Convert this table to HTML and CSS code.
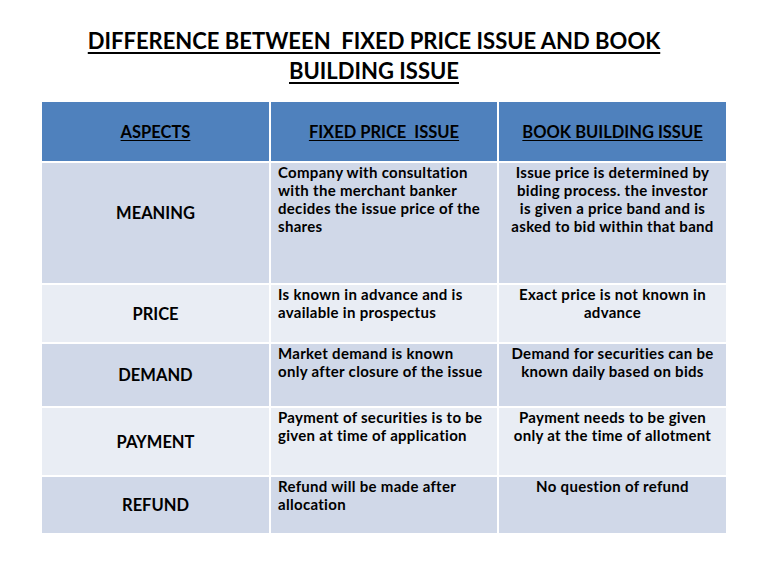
FILE: index.html
```html
<!DOCTYPE html>
<html lang="en">
<head>
<meta charset="utf-8">
<title>Difference between Fixed Price Issue and Book Building Issue</title>
<link rel="stylesheet" href="styles.css">
</head>
<body>
<h1 class="title">DIFFERENCE BETWEEN&nbsp; FIXED PRICE ISSUE AND BOOK<br>BUILDING ISSUE</h1>
<table class="cmp">
  <colgroup>
    <col class="c1"><col class="c2"><col class="c3">
  </colgroup>
  <thead>
    <tr class="head">
      <th><span class="u">ASPECTS</span></th>
      <th><span class="u">FIXED PRICE&nbsp; ISSUE</span></th>
      <th><span class="u">BOOK BUILDING ISSUE</span></th>
    </tr>
  </thead>
  <tbody>
    <tr class="r-meaning odd">
      <td class="aspect"><span class="lbl-meaning">MEANING</span></td>
      <td class="fixed">Company with consultation<br>with the merchant banker<br>decides the issue price of the<br>shares</td>
      <td class="book">Issue price is determined by<br>biding process. the investor<br>is given a price band and is<br>asked to bid within that band</td>
    </tr>
    <tr class="r-price even">
      <td class="aspect">PRICE</td>
      <td class="fixed">Is known in advance and is<br>available in prospectus</td>
      <td class="book">Exact price is not known in<br>advance</td>
    </tr>
    <tr class="r-demand odd">
      <td class="aspect">DEMAND</td>
      <td class="fixed">Market demand is known<br>only after closure of the issue</td>
      <td class="book">Demand for securities can be<br>known daily based on bids</td>
    </tr>
    <tr class="r-payment even">
      <td class="aspect">PAYMENT</td>
      <td class="fixed">Payment of securities is to be<br>given at time of application</td>
      <td class="book">Payment needs to be given<br>only at the time of allotment</td>
    </tr>
    <tr class="r-refund odd">
      <td class="aspect">REFUND</td>
      <td class="fixed">Refund will be made after<br>allocation</td>
      <td class="book">No question of refund</td>
    </tr>
  </tbody>
</table>
</body>
</html>
```
FILE: styles.css
```css
html, body {
  margin: 0;
  padding: 0;
  background: #ffffff;
}
body {
  font-family: Lato, "Open Sans", "Liberation Sans", sans-serif;
  font-weight: 700;
  color: #000000;
  width: 768px;
  height: 576px;
  overflow: hidden;
}
.title {
  margin: 26px 0 0 0;
  font-size: 22px;
  line-height: 30px;
  font-weight: 700;
  text-align: center;
  text-decoration: underline;
  text-decoration-thickness: 2px;
  text-underline-offset: 3px;
  width: 748px;
}
.cmp {
  margin: 14px 0 0 40px;
  border-collapse: separate;
  border-spacing: 2px;
  table-layout: fixed;
  width: 688px;
}
.c1 { width: 227px; }
.c2 { width: 226px; }
.c3 { width: 227px; }
.cmp th, .cmp td {
  padding: 0;
}
.head th {
  background: #4f81bd;
  height: 59px;
  font-size: 16.5px;
  font-weight: 700;
  text-align: center;
  vertical-align: middle;
}
.u {
  text-decoration: underline;
  text-underline-offset: 2px;
}
.odd td { background: #d0d8e8; }
.even td { background: #e9edf4; }
td.aspect {
  font-size: 16.5px;
  text-align: center;
  vertical-align: middle;
}
td.fixed, td.book {
  font-size: 15px;
  line-height: 18px;
  letter-spacing: 0.3px;
  vertical-align: top;
  padding-top: 0;
  white-space: nowrap;
}
td.fixed {
  text-align: left;
  padding-left: 7px;
}
td.book {
  text-align: center;
}
.lbl-meaning {
  display: block;
  padding-bottom: 20px;
}
.r-meaning { height: 120px; }
.r-price { height: 57px; }
.r-demand { height: 62px; }
.r-payment { height: 67px; }
.r-refund { height: 56px; }
```
